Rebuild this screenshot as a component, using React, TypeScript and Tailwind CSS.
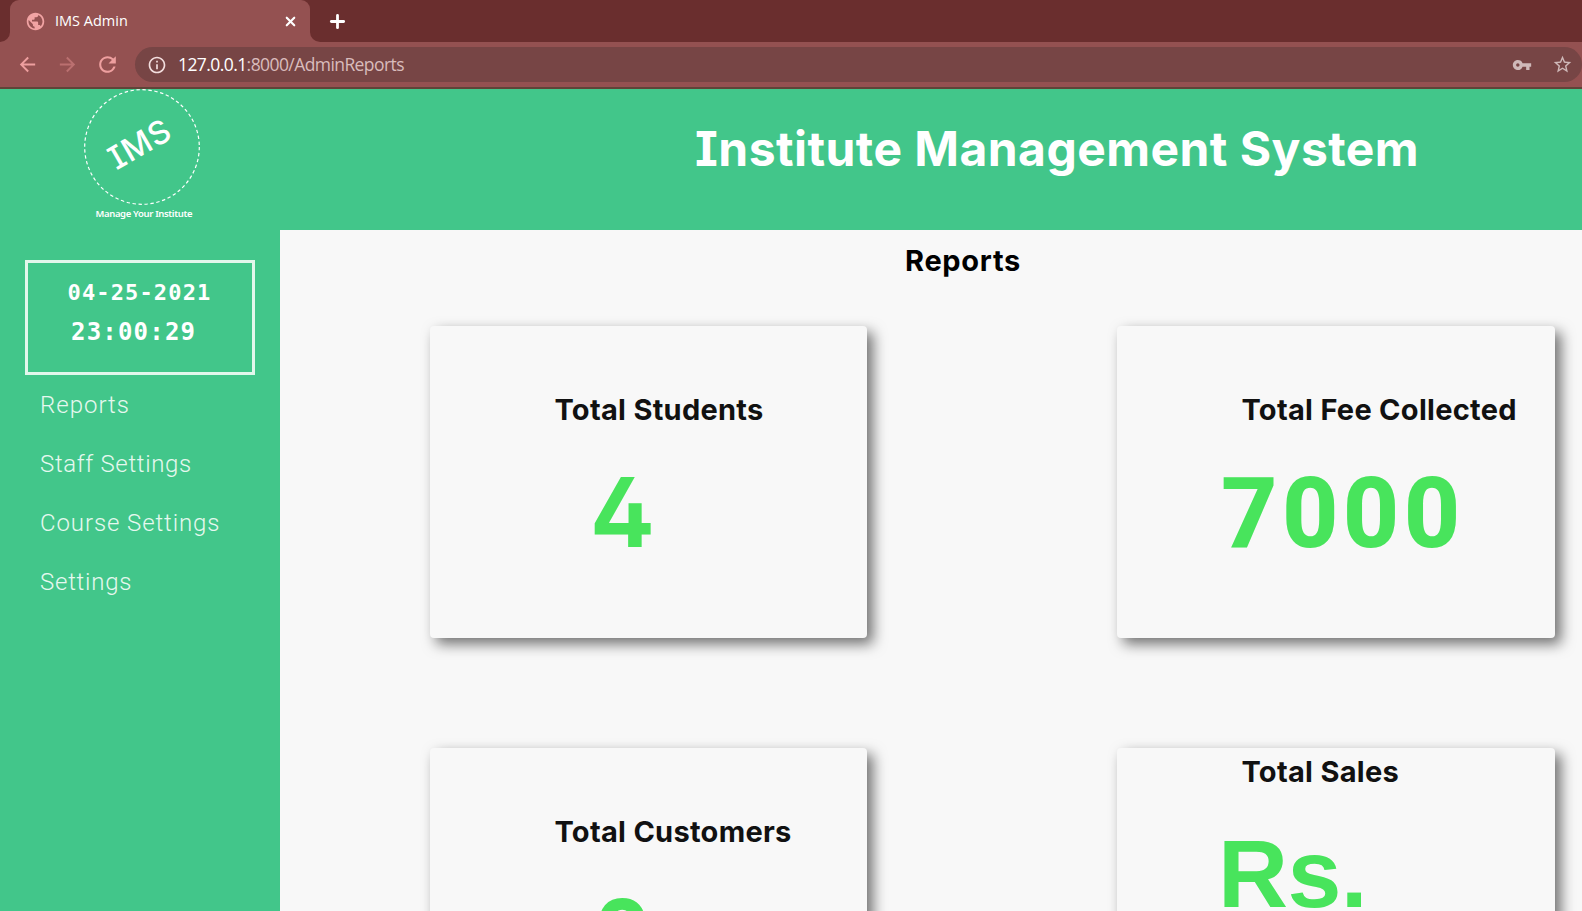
import React from "react";
import { X, Plus } from "lucide-react";
import { MdArrowBack, MdArrowForward, MdRefresh, MdInfoOutline, MdVpnKey, MdStarBorder, MdPublic } from "react-icons/md";

function BrowserChrome() {
  return (
    <div className="shrink-0 font-['Open_Sans','Noto_Sans',sans-serif]">
      <div className="flex h-[42px] items-stretch bg-[#6a2e2e]">
        <div className="w-2.5 bg-[#945151]">
          <div className="h-full rounded-br-[10px] bg-[#6a2e2e]" />
        </div>
        <div className="flex w-[300px] items-center rounded-t-[9px] bg-[#945151] pr-[12px] pl-[15px]">
          <MdPublic className="size-[21px] text-[#f1a3a3]" />
          <span className="ml-[9px] text-[14.5px] leading-5 text-white">IMS Admin</span>
          <X className="ml-auto size-[15px] text-white" strokeWidth={3.4} />
        </div>
        <div className="w-2.5 bg-[#945151]">
          <div className="h-full rounded-bl-[10px] bg-[#6a2e2e]" />
        </div>
        <Plus className="mt-[11px] ml-[7px] size-[21px] text-white" strokeWidth={3.2} />
      </div>
      <div className="flex h-[45px] items-center bg-[#945151]">
        <MdArrowBack className="ml-[16px] size-[23px] text-[#ee9f9f]" />
        <MdArrowForward className="ml-[17px] size-[23px] text-[#bb7070]" />
        <MdRefresh className="ml-[16px] size-[25px] text-[#ee9f9f]" />
        <div className="ml-[15px] flex h-[35px] w-[1447px] items-center rounded-full bg-[#774545] pr-[9px] pl-[12px]">
          <MdInfoOutline className="size-5 text-[#f3dede]" />
          <span className="-mt-0.5 ml-[11px] text-[17.5px] leading-6 tracking-[-0.58px] text-[#d9bcbc]">
            <span className="text-white">127.0.0.1</span>:8000/AdminReports
          </span>
          <MdVpnKey className="ml-auto size-5 text-[#cfb9b9]" />
          <MdStarBorder className="ml-5 size-[21px] text-[#cfb9b9]" />
        </div>
      </div>
      <div className="h-0.5 bg-[#5e4538]" />
    </div>
  );
}

function Logo() {
  return (
    <svg className="block h-[141px] w-[280px]" viewBox="0 0 280 141">
      <circle cx="142" cy="58" r="57.3" fill="none" stroke="#fff" strokeWidth="1.2" strokeDasharray="3.4 2.6" />
      <g fill="#fff" className="font-['Inter',sans-serif] font-medium [font-feature-settings:'cv08']">
        <text x="0" y="0" textAnchor="middle" fontSize="32" textLength="66" transform="translate(145 65) rotate(-30)">
          IMS
        </text>
      </g>
      <text x="95.5" y="128" fontSize="9.5" textLength="97" fill="#fff" className="font-['Noto_Sans',sans-serif] font-semibold">
        Manage Your Institute
      </text>
    </svg>
  );
}

function Sidebar() {
  return (
    <aside className="w-[280px] shrink-0 bg-[#42c68a] pt-[30px]">
      <div className="ml-[25px] h-[115px] w-[230px] border-[3px] border-[#e2f7ec] pt-[17px] font-['DejaVu_Sans_Mono',monospace] font-bold text-white">
        <div className="ml-[39.5px] text-[22px] leading-[26px] tracking-[1.15px]">04-25-2021</div>
        <div className="mt-[13px] ml-[43px] text-[24px] leading-[26px] tracking-[1.2px]">23:00:29</div>
      </div>
      <nav className="mt-px ml-[40px] flex flex-col font-['Roboto',sans-serif] text-[24px] leading-[59px] font-light text-[#e6f8ef]">
        <a className="tracking-[1px]">Reports</a>
        <a className="tracking-[0.65px]">Staff Settings</a>
        <a className="tracking-[0.9px]">Course Settings</a>
        <a className="tracking-[0.75px]">Settings</a>
      </nav>
    </aside>
  );
}

const valueStyles = {
  four: "mt-[34px] ml-[160px] font-['Inter',sans-serif] text-[96px] font-bold [font-feature-settings:'cv02']",
  amount: "mt-[36px] ml-[104px] font-['Roboto',sans-serif] text-[98px] font-extrabold tracking-[4.4px]",
  zero: "mt-[36px] ml-[164px] font-['Roboto',sans-serif] text-[98px] font-extrabold",
  currency: "mt-[34px] ml-[101px] font-['Liberation_Sans',sans-serif] text-[97px] font-bold tracking-[-0.6px]",
};

function ReportCard({ title, value, top, look }: { title: string; value: string; top: string; look: keyof typeof valueStyles }) {
  return (
    <section className={"h-[312px] rounded-[4px] bg-[#f8f8f8] shadow-[6px_6px_14px_rgba(0,0,0,0.55)] " + top}>
      <h3 className="ml-[124.5px] font-['Inter',sans-serif] text-[29px] leading-[36px] font-bold tracking-[0.28px] whitespace-nowrap text-[#111]">
        {title}
      </h3>
      <p className={"leading-[100px] whitespace-nowrap text-[#48e45c] " + valueStyles[look]}>{value}</p>
    </section>
  );
}

export default function App() {
  return (
    <div className="flex h-[911px] w-[1582px] flex-col overflow-hidden bg-[#f8f8f8]">
      <BrowserChrome />
      <header className="flex h-[141px] shrink-0 bg-[#42c68a]">
        <Logo />
        <h1 className="mt-[30px] ml-[415px] font-['Inter',sans-serif] text-[48px] leading-[60px] font-bold tracking-[0.45px] whitespace-nowrap text-white [font-feature-settings:'cv08']">
          Institute Management System
        </h1>
      </header>
      <div className="flex min-h-0 flex-1">
        <Sidebar />
        <main className="min-w-0 flex-1">
          <h2 className="mt-[13px] ml-[625px] font-['Inter',sans-serif] text-[29px] leading-[36px] font-bold tracking-[0.7px] text-black">
            Reports
          </h2>
          <div className="mt-[47px] ml-[150px] grid grid-cols-[437px_438px] gap-x-[250px] gap-y-[110px]">
            <ReportCard title="Total Students" value="4" top="pt-[66px]" look="four" />
            <ReportCard title="Total Fee Collected" value="7000" top="pt-[66px]" look="amount" />
            <ReportCard title="Total Customers" value="0" top="pt-[66px]" look="zero" />
            <ReportCard title="Total Sales" value="Rs." top="pt-[6px]" look="currency" />
          </div>
        </main>
      </div>
    </div>
  );
}
